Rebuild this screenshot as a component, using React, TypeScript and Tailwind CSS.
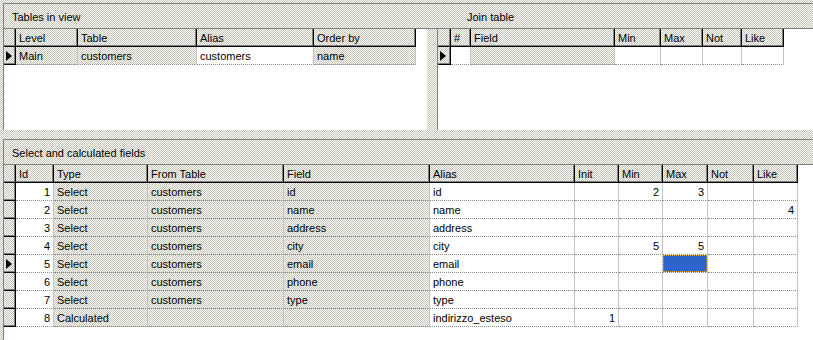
import React from "react";

const dither =
  "bg-[image:repeating-conic-gradient(#c4c4bc_0_25%,#fdfdf6_0_50%)] bg-[length:2px_2px]";

type Col = { label: string; w: string; white?: boolean; right?: boolean };

const headCell = `${dither} h-full border-r border-b border-black shadow-[inset_-1px_-1px_0_#808080] flex items-center pl-[3px] pt-[1px] shrink-0`;
const bodyCell =
  "h-full border-r border-b border-dotted border-[#8c8c8c] [border-right-style:solid] border-r-[#c4c4c4] flex items-center pt-[1px] shrink-0 overflow-hidden whitespace-nowrap";

const Arrow = () => (
  <div className="w-0 h-0 border-y-[5px] border-y-transparent border-l-[6px] border-l-black ml-[2px]" />
);

const Grid = ({
  cols,
  rows,
  current,
  selected,
  indW,
}: {
  cols: Col[];
  rows: string[][];
  current: number;
  selected?: [number, number];
  indW: string;
}) => {
  return (
    <div className="flex flex-col">
      <div className="flex h-[18px]">
        <div className={`${headCell} ${indW}`} />
        {cols.map((c) => (
          <div key={c.label} className={`${headCell} ${c.w}`}>
            {c.label}
          </div>
        ))}
      </div>
      {rows.map((row, ri) => (
        <div key={ri} className="flex h-[18px]">
          <div className={`${headCell} ${indW} !pl-0 !pt-0`}>
            {ri === current && <Arrow />}
          </div>
          {cols.map((c, ci) => {
            const sel = selected && selected[0] === ri && selected[1] === ci;
            return (
              <div
                key={c.label}
                className={`${bodyCell} ${c.w} ${c.white ? "bg-white" : dither} ${
                  c.right ? "justify-end pr-[3px]" : "pl-[3px]"
                } ${sel ? "!p-0" : ""}`}
              >
                {sel ? (
                  <div className="h-full w-full bg-[#2c64c8] border border-dotted border-[#d8a040]" />
                ) : (
                  row[ci]
                )}
              </div>
            );
          })}
        </div>
      ))}
    </div>
  );
};

const viewCols: Col[] = [
  { label: "Level", w: "w-[62px]" },
  { label: "Table", w: "w-[119px]" },
  { label: "Alias", w: "w-[117px]", white: true },
  { label: "Order by", w: "w-[102px]" },
];

const joinCols: Col[] = [
  { label: "#", w: "w-[20px]", white: true },
  { label: "Field", w: "w-[144px]" },
  { label: "Min", w: "w-[46px]", white: true },
  { label: "Max", w: "w-[42px]", white: true },
  { label: "Not", w: "w-[39px]", white: true },
  { label: "Like", w: "w-[42px]", white: true },
];

const fieldCols: Col[] = [
  { label: "Id", w: "w-[38px]", white: true, right: true },
  { label: "Type", w: "w-[94px]" },
  { label: "From Table", w: "w-[136px]" },
  { label: "Field", w: "w-[146px]" },
  { label: "Alias", w: "w-[145px]", white: true },
  { label: "Init", w: "w-[44px]", white: true, right: true },
  { label: "Min", w: "w-[44px]", white: true, right: true },
  { label: "Max", w: "w-[45px]", white: true, right: true },
  { label: "Not", w: "w-[46px]", white: true, right: true },
  { label: "Like", w: "w-[44px]", white: true, right: true },
];

const fieldRows = [
  ["1", "Select", "customers", "id", "id", "", "2", "3", "", ""],
  ["2", "Select", "customers", "name", "name", "", "", "", "", "4"],
  ["3", "Select", "customers", "address", "address", "", "", "", "", ""],
  ["4", "Select", "customers", "city", "city", "", "5", "5", "", ""],
  ["5", "Select", "customers", "email", "email", "", "", "", "", ""],
  ["6", "Select", "customers", "phone", "phone", "", "", "", "", ""],
  ["7", "Select", "customers", "type", "type", "", "", "", "", ""],
  ["8", "Calculated", "", "", "indirizzo_esteso", "1", "", "", "", ""],
];

export default function App() {
  return (
    <div
      className={`w-[813px] h-[340px] ${dither} font-['Liberation_Sans',Arial,sans-serif] text-[11px] leading-none text-black flex flex-col overflow-hidden`}
    >
      {/* upper panels */}
      <div className="mt-[3px] ml-[3px] h-[127px] border-t border-l border-[#808080] flex flex-col">
        <div className="h-[24px] flex items-center pt-[2px]">
          <div className="w-[433px] pl-[8px]">Tables in view</div>
          <div className="pl-[30px]">Join table</div>
        </div>
        <div className="flex-1 flex border-t border-[#808080]">
          <div className="w-[423px] bg-white">
            <Grid cols={viewCols} rows={[["Main", "customers", "customers", "name"]]} current={0} indW="w-[12px]" />
          </div>
          <div className="w-[10px]" />
          <div className="flex-1 bg-white border-l border-[#808080]">
            <Grid cols={joinCols} rows={[["", "", "", "", "", ""]]} current={0} indW="w-[13px]" />
          </div>
        </div>
      </div>

      {/* select and calculated fields */}
      <div className="mt-[9px] ml-[3px] flex-1 border-t border-l border-[#808080] flex flex-col">
        <div className="h-[24px] flex items-center pl-[8px] pt-[2px]">Select and calculated fields</div>
        <div className="flex-1 bg-white border-t border-[#808080]">
          <Grid cols={fieldCols} rows={fieldRows} current={4} selected={[4, 7]} indW="w-[12px]" />
        </div>
      </div>
    </div>
  );
}
